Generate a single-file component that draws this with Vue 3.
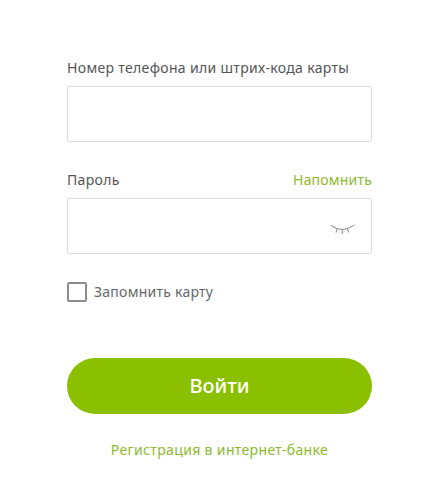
<script setup>
</script>

<template>
  <main class="page">
    <form class="form" @submit.prevent>
      <div class="label-row">
        <label class="label">Номер телефона или штрих-кода карты</label>
      </div>
      <div class="field"></div>
      <div class="label-row second">
        <label class="label">Пароль</label>
        <a class="remind">Напомнить</a>
      </div>
      <div class="field eye-field">
        <svg class="eye" width="26" height="14" viewBox="0 0 26 14" fill="none" stroke="#858585" stroke-width="1">
          <path d="M4 5.5C9 9.3 17 9.3 22.5 5.5" />
          <path d="M4.5 6L2 4.2M8.2 8L7 11.5M13.3 9L13.3 13M18.5 8L19.8 11.5M22 6L25.5 3.8" />
        </svg>
      </div>
      <div class="remember">
        <span class="box"></span>
        <span class="remember-text">Запомнить карту</span>
      </div>
      <button class="submit" type="button">Войти</button>
      <a class="register">Регистрация в интернет-банке</a>
    </form>
  </main>
</template>

<style scoped>
.page {
  width: 443px;
  height: 489px;
  background: #fff;
  font-family: "Noto Sans", "Open Sans", sans-serif;
  box-sizing: border-box;
  padding: 57px 71px 0 67px;
}
.form {
  display: flex;
  flex-direction: column;
}
.label-row {
  display: flex;
  justify-content: space-between;
  align-items: center;
  height: 20px;
  margin-bottom: 9px;
}
.second {
  margin-top: 27px;
}
.label {
  font-size: 14px;
  color: #555;
  letter-spacing: 0.33px;
}
.remind {
  font-size: 14px;
  color: #8cb92f;
  letter-spacing: 0.2px;
}
.field {
  height: 56px;
  box-sizing: border-box;
  border: 1px solid #dcdcdc;
  border-radius: 2px;
  background: #fff;
}
.eye-field {
  display: flex;
  align-items: center;
  justify-content: flex-end;
  padding-right: 16px;
  padding-top: 4px;
}
.remember {
  display: flex;
  align-items: center;
  gap: 7px;
  margin-top: 28px;
  height: 20px;
}
.box {
  width: 20px;
  height: 20px;
  box-sizing: border-box;
  border: 2px solid #8c8c8c;
  border-radius: 2px;
}
.remember-text {
  font-size: 14px;
  color: #666;
  letter-spacing: 0.25px;
  margin-top: -2px;
}
.submit {
  margin-top: 56px;
  height: 56px;
  border: 0;
  border-radius: 28px;
  background: #8bc000;
  color: #fff;
  font-family: inherit;
  font-size: 20px;
  font-weight: 500;
  padding: 0 0 2px;
}
.register {
  margin-top: 26px;
  text-align: center;
  font-size: 14px;
  color: #8cb92f;
  letter-spacing: 0.35px;
}
</style>
